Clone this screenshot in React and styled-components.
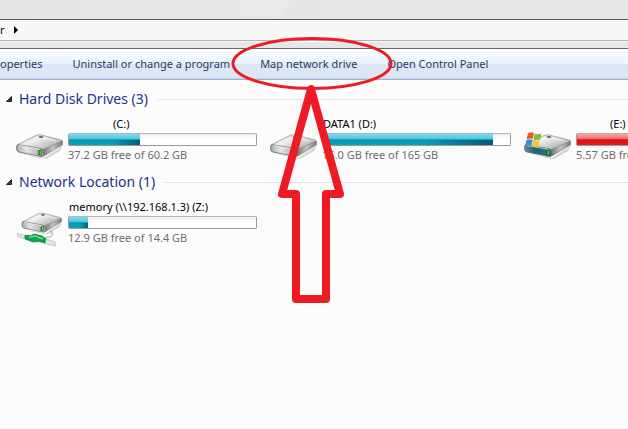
import React from "react";
import styled, { createGlobalStyle } from "styled-components";

const Global = createGlobalStyle`
  *, *::before, *::after { box-sizing: border-box; }
  body {
    margin: 0;
    background: #fcfcfc;
    font: 11px/16px "Noto Sans", "Open Sans", sans-serif;
    color: #000;
  }
  button { font: inherit; color: inherit; background: none; border: 0; padding: 0; cursor: pointer; }
`;

const Window = styled.div`
  position: relative;
  min-height: 100vh;
  overflow: hidden;
`;

const TitleStrip = styled.header`
  height: 19px;
  background: linear-gradient(115deg, #e5e5e5, #e9e9e9 45%, #e6e6e6 46%, #e8e8e8);
`;

const AddressBar = styled.nav`
  display: flex;
  align-items: center;
  gap: 9px;
  height: 22px;
  border-top: 1px solid #5c5c5c;
  border-bottom: 1px solid #b4b4b4;
  background: #f8f8f8;
`;

const Caret = styled.svg`
  display: block;
  width: 4px;
  height: 8px;
`;

const Spacer = styled.div`
  height: 7px;
  background: #e7e7e7;
  border-top: 1px solid #f4f4f4;
`;

const Toolbar = styled.div`
  display: flex;
  align-items: center;
  gap: 30px;
  height: 32px;
  border-top: 1px solid #666;
  border-bottom: 1px solid #a0afc9;
  background: linear-gradient(#fbfdff, #e9f3fc 48%, #dce7f5 52%, #dbe6f4 92%, #c9d8eb);
  color: #1e395b;
  white-space: nowrap;
`;

const Command = styled.button`
  flex: none;
`;

const Content = styled.main`
  display: grid;
  padding-top: 8px;
`;

const Group = styled.section`
  height: 83px;
`;

const GroupHeader = styled.div`
  display: flex;
  align-items: center;
  gap: 9px;
  padding-left: 6px;
  height: 22px;
  &::after {
    content: "";
    flex: 1;
    height: 1px;
    background: #e2e2e2;
  }
`;

const GroupToggle = styled.button`
  display: flex;
  align-items: center;
  gap: 7px;
  color: #1e3287;
  font-size: 14px;
  line-height: 20px;
  white-space: nowrap;
`;

const Triangle = styled.svg`
  display: block;
  width: 6px;
  height: 6px;
`;

const Tiles = styled.div`
  display: grid;
  grid-auto-flow: column;
  grid-auto-columns: 241px;
  gap: 13px;
  padding: 6px 0 0 16px;
`;

const Tile = styled.article`
  display: flex;
  gap: 4px;
`;

const Icon = styled.svg`
  flex: none;
  display: block;
  width: 48px;
  height: 36px;
  margin-top: 16px;
  overflow: visible;
`;

const Details = styled.div`
  flex: 1;
  white-space: nowrap;
`;

const Name = styled.div`
  padding-left: ${(p) => p.$indent}px;
`;

const Meter = styled.div`
  height: 13px;
  margin-top: 1px;
  border: 1px solid #9a9a9a;
  border-top-color: #b4b4b4;
  border-radius: 2px;
  background: linear-gradient(#f0f0f0, #fff 50%);
`;

const Fill = styled.div`
  height: 100%;
  background: ${(p) =>
    p.$full
      ? "linear-gradient(#f9a5a5, #f26b6b 45%, #dc1010 52%, #e81c1c)"
      : `linear-gradient(90deg, transparent 60%, rgba(0, 55, 80, 0.65)) bottom / 100% 50% no-repeat,
         linear-gradient(#7fdcf2, #4cc6e4 45%, #0b93b0 52%, #0aa3bd)`};
`;

const Info = styled.div`
  margin-top: 1px;
  color: #6d6d6d;
`;

const Annotation = styled.svg`
  position: absolute;
  top: 36px;
  left: 230px;
  width: 164px;
  height: 268px;
  pointer-events: none;
`;

function DriveBody({ id, system }) {
  return (
    <>
      <defs>
        <linearGradient id={`${id}-top`} x1="0" y1="0" x2="1" y2="0.8">
          <stop offset="0" stopColor="#b5b5b5" />
          <stop offset="0.4" stopColor="#f0f0f0" />
          <stop offset="1" stopColor="#a4a4a4" />
        </linearGradient>
        <linearGradient id={`${id}-front`} x1="0" y1="0" x2="1" y2="0">
          <stop offset="0" stopColor={system ? "#668e9c" : "#a9a9ad"} />
          <stop offset="0.35" stopColor={system ? "#1f6178" : "#e6e6ec"} />
          <stop offset="1" stopColor={system ? "#247f8b" : "#9c9ca2"} />
        </linearGradient>
        <linearGradient id={`${id}-side`} x1="0" y1="0" x2="1" y2="0">
          <stop offset="0" stopColor="#777" />
          <stop offset="0.5" stopColor="#c2c2c2" />
          <stop offset="1" stopColor="#7a7a7a" />
        </linearGradient>
      </defs>
      <path d="M3 21 L28 26 L47 14 L44 19 L30 27 L22 26Z" fill="#000" opacity="0.16" />
      <path d="M1 13 L20 3.5 Q22 2.5 25 3 L45 8 Q47 8.8 46 10 L28 18 Q26 19 23 18Z" fill={`url(#${id}-top)`} stroke="#8b8b8b" strokeWidth="0.7" />
      <path d="M27 17.5 L46.5 9 V13 L28 24Z" fill={`url(#${id}-side)`} stroke="#777" strokeWidth="0.5" />
      <path d="M0.7 14 Q1 12.6 3 12.8 L24 16.5 Q27 17 27.5 19 L28 23 Q27.8 25 25 24.5 L3 20 Q1 19.5 0.8 18Z" fill={`url(#${id}-front)`} stroke="#626262" strokeWidth="0.8" />
      <path d="M3 13.4 L24 17.2" stroke="#fff" strokeWidth="0.8" opacity="0.8" />
      <path d="M9 10.5 L22 5 L40 8.8" fill="none" stroke="#fff" strokeWidth="0.8" opacity="0.8" />
      <ellipse cx="25" cy="5" rx="2.5" ry="0.9" fill="#696969" />
      <rect x="22.4" y="18.2" width="3.2" height="5" fill="#174b13" />
      <rect x="23.5" y="18.7" width="1.7" height="4" fill="#42ed19" />
    </>
  );
}

function DriveIcon({ id, kind }) {
  return (
    <Icon viewBox="0 0 48 36" aria-hidden="true">
      {kind === "network" ? (
        <>
          <path d="M34 16 Q39 19 34 22 L27 23" fill="none" stroke="#b7c9c9" strokeWidth="1.5" />
          <g transform="translate(5.5 -4.5) scale(0.86 0.88)">
            <DriveBody id={id} />
          </g>
          <path d="M1.5 18.5 L12 21 L12 24.5 L1.5 21.5Z" fill="#dce9e7" stroke="#a5b8b8" strokeWidth="0.7" />
          <path d="M27 23 L39 27 L40 31 L28 28.5Z" fill="#dce9e7" stroke="#a5b8b8" strokeWidth="0.7" />
          <path d="M9 20.5 L15 20.5 L18 19 L26 21 L29.5 23.5 L29 28 L23 26.5 L17 27 L9 24Z" fill="#10a349" stroke="#087a32" strokeWidth="0.7" />
          <path d="M13 22 L19 21 L27 24" fill="none" stroke="#66df8e" strokeWidth="1.4" />
        </>
      ) : (
        <DriveBody id={id} system={kind === "system"} />
      )}
      {kind === "system" && (
        <g>
          <path d="M4 1.2 Q7 -0.8 10 1 L8.8 7 Q6 5.7 2.7 7.3Z" fill="#ee5a24" />
          <path d="M10.8 1.4 Q14 3 17.5 1.3 L16.2 7.5 Q13 9 9.6 7.3Z" fill="#83bd2e" />
          <path d="M2.4 8.2 Q5.5 6.6 8.6 8 L7.3 14 Q4 12.5 1 14.3Z" fill="#338fd7" />
          <path d="M9.4 8.2 Q12.5 10 16 8.4 L14.6 14.6 Q11.3 16 8 14.2Z" fill="#fdc626" />
        </g>
      )}
    </Icon>
  );
}

const groups = [
  {
    title: "Hard Disk Drives (3)",
    drives: [
      { id: "c", name: "(C:)", indent: 45, used: 38, info: "37.2 GB free of 60.2 GB" },
      { id: "d", name: "DATA1 (D:)", indent: 1, used: 91, info: "15.0 GB free of 165 GB" },
      { id: "e", name: "(E:)", indent: 34, used: 100, full: true, kind: "system", info: "5.57 GB free" },
    ],
  },
  {
    title: "Network Location (1)",
    drives: [
      { id: "z", name: "memory (\\\\192.168.1.3) (Z:)", indent: 1, used: 10, kind: "network", info: "12.9 GB free of 14.4 GB" },
    ],
  },
];

const commands = ["operties", "Uninstall or change a program", "Map network drive", "Open Control Panel"];

export default function App() {
  return (
    <Window>
      <Global />
      <TitleStrip />
      <AddressBar aria-label="Address">
        <span>r</span>
        <Caret viewBox="0 0 4 8" aria-hidden="true">
          <path d="M0 0 L4 4 L0 8Z" />
        </Caret>
      </AddressBar>
      <Spacer />
      <Toolbar role="toolbar">
        {commands.map((label) => (
          <Command key={label} type="button">{label}</Command>
        ))}
      </Toolbar>
      <Content>
        {groups.map((group) => (
          <Group key={group.title}>
            <GroupHeader>
              <GroupToggle type="button" aria-expanded="true">
                <Triangle viewBox="0 0 6 6" aria-hidden="true">
                  <path d="M5.5 0.5 V5.5 H0.5Z" fill="#404040" stroke="#222" />
                </Triangle>
                {group.title}
              </GroupToggle>
            </GroupHeader>
            <Tiles>
              {group.drives.map((d) => (
                <Tile key={d.id}>
                  <DriveIcon id={d.id} kind={d.kind} />
                  <Details>
                    <Name $indent={d.indent}>{d.name}</Name>
                    <Meter role="meter" aria-label={d.name} aria-valuenow={d.used} aria-valuemin={0} aria-valuemax={100}>
                      <Fill $full={d.full} style={{ width: `${d.used}%` }} />
                    </Meter>
                    <Info>{d.info}</Info>
                  </Details>
                </Tile>
              ))}
            </Tiles>
          </Group>
        ))}
      </Content>
      <Annotation viewBox="0 0 164 268" fill="none" stroke="#ed1c24" aria-hidden="true">
        <ellipse cx="82" cy="27.5" rx="79" ry="25" strokeWidth="3" />
        <path d="M81 53 L52 158 H66 V263 H96 V158 H110 Z" strokeWidth="8" strokeLinejoin="round" />
      </Annotation>
    </Window>
  );
}
